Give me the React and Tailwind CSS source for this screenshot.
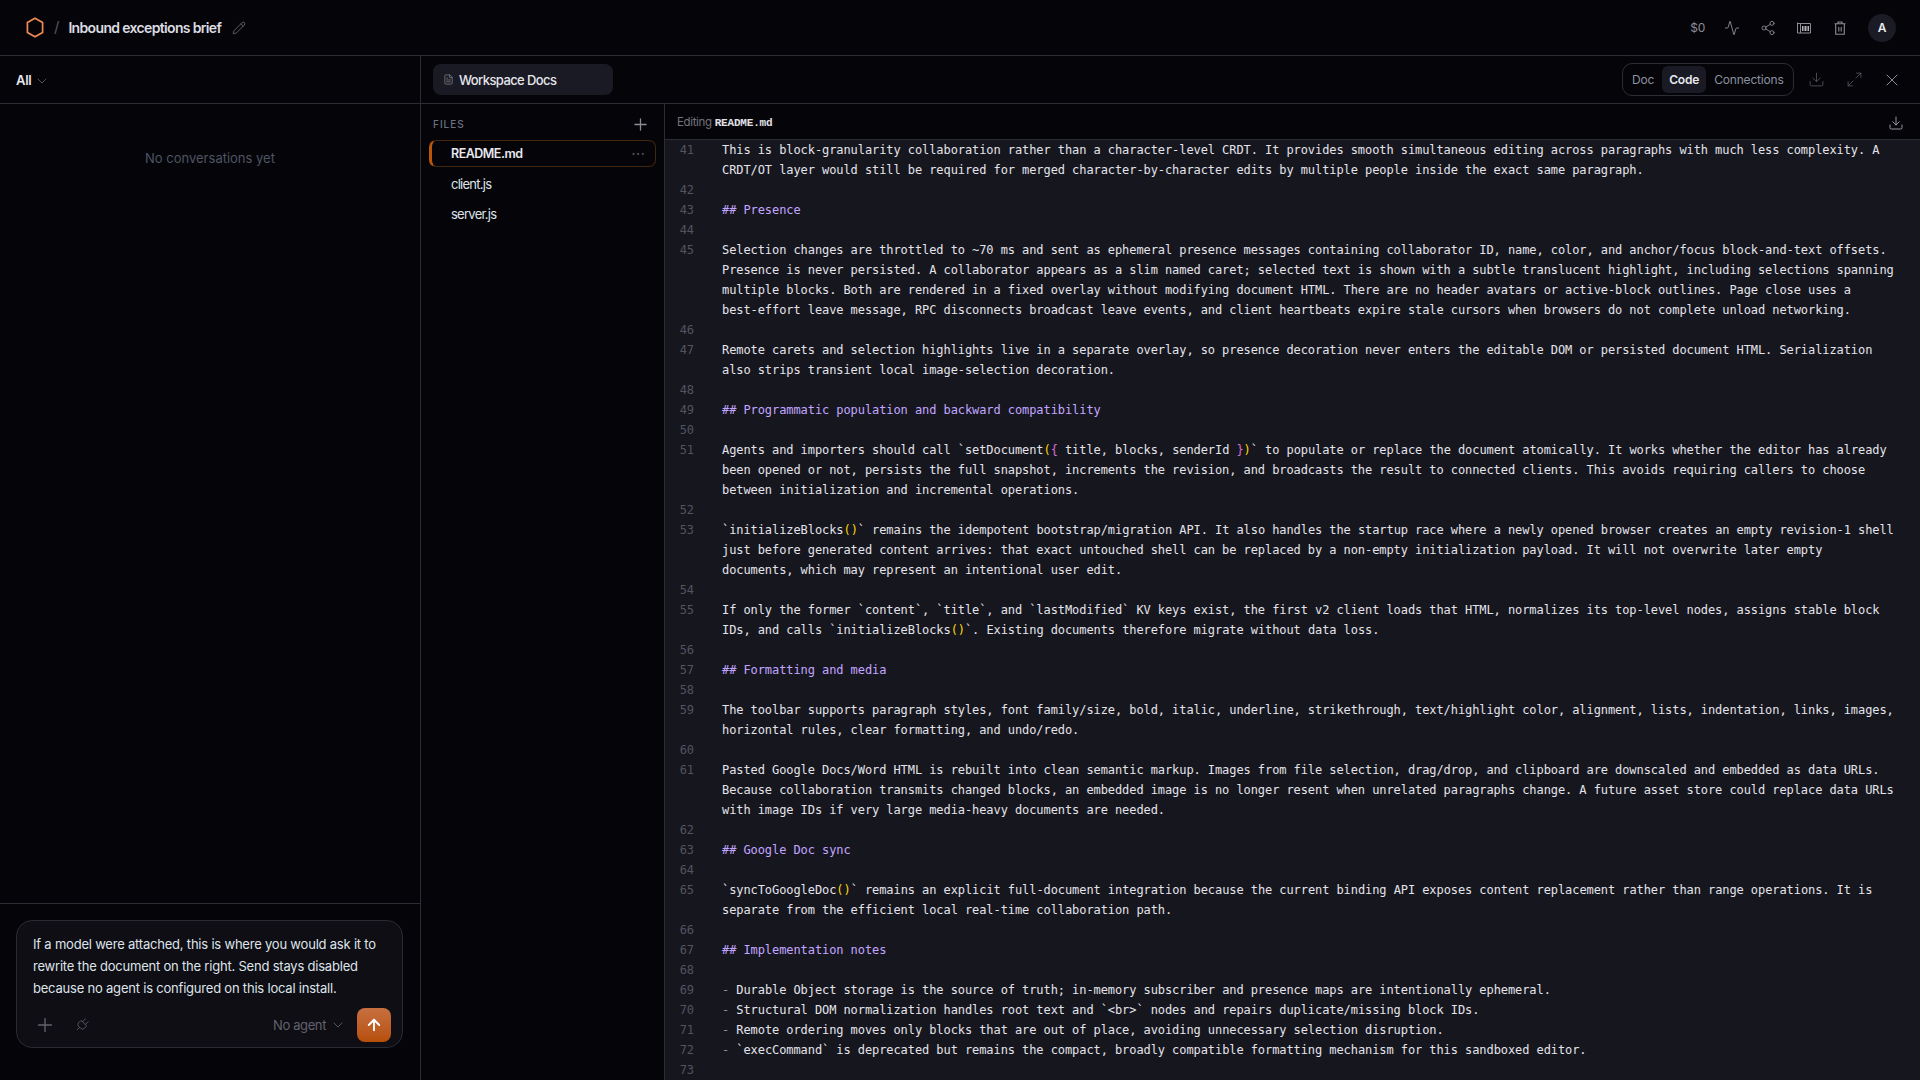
import React from "react";
import { Activity, Share2, Plug, Plus, ChevronDown, ArrowUp, Download, Maximize2, X, Pencil, FileText, MoreHorizontal } from "lucide-react";

const SANS = "font-['Inter','Noto_Sans',sans-serif]";

const code = [
  [41, ["This is block-granularity collaboration rather than a character-level CRDT. It provides smooth simultaneous editing across paragraphs with much less complexity. A", "CRDT/OT layer would still be required for merged character-by-character edits by multiple people inside the exact same paragraph."]],
  [42, [""]],
  [43, ["## Presence"]],
  [44, [""]],
  [45, ["Selection changes are throttled to ~70 ms and sent as ephemeral presence messages containing collaborator ID, name, color, and anchor/focus block-and-text offsets.", "Presence is never persisted. A collaborator appears as a slim named caret; selected text is shown with a subtle translucent highlight, including selections spanning", "multiple blocks. Both are rendered in a fixed overlay without modifying document HTML. There are no header avatars or active-block outlines. Page close uses a", "best-effort leave message, RPC disconnects broadcast leave events, and client heartbeats expire stale cursors when browsers do not complete unload networking."]],
  [46, [""]],
  [47, ["Remote carets and selection highlights live in a separate overlay, so presence decoration never enters the editable DOM or persisted document HTML. Serialization", "also strips transient local image-selection decoration."]],
  [48, [""]],
  [49, ["## Programmatic population and backward compatibility"]],
  [50, [""]],
  [51, ["Agents and importers should call `setDocument({ title, blocks, senderId })` to populate or replace the document atomically. It works whether the editor has already", "been opened or not, persists the full snapshot, increments the revision, and broadcasts the result to connected clients. This avoids requiring callers to choose", "between initialization and incremental operations."]],
  [52, [""]],
  [53, ["`initializeBlocks()` remains the idempotent bootstrap/migration API. It also handles the startup race where a newly opened browser creates an empty revision-1 shell", "just before generated content arrives: that exact untouched shell can be replaced by a non-empty initialization payload. It will not overwrite later empty", "documents, which may represent an intentional user edit."]],
  [54, [""]],
  [55, ["If only the former `content`, `title`, and `lastModified` KV keys exist, the first v2 client loads that HTML, normalizes its top-level nodes, assigns stable block", "IDs, and calls `initializeBlocks()`. Existing documents therefore migrate without data loss."]],
  [56, [""]],
  [57, ["## Formatting and media"]],
  [58, [""]],
  [59, ["The toolbar supports paragraph styles, font family/size, bold, italic, underline, strikethrough, text/highlight color, alignment, lists, indentation, links, images,", "horizontal rules, clear formatting, and undo/redo."]],
  [60, [""]],
  [61, ["Pasted Google Docs/Word HTML is rebuilt into clean semantic markup. Images from file selection, drag/drop, and clipboard are downscaled and embedded as data URLs.", "Because collaboration transmits changed blocks, an embedded image is no longer resent when unrelated paragraphs change. A future asset store could replace data URLs", "with image IDs if very large media-heavy documents are needed."]],
  [62, [""]],
  [63, ["## Google Doc sync"]],
  [64, [""]],
  [65, ["`syncToGoogleDoc()` remains an explicit full-document integration because the current binding API exposes content replacement rather than range operations. It is", "separate from the efficient local real-time collaboration path."]],
  [66, [""]],
  [67, ["## Implementation notes"]],
  [68, [""]],
  [69, ["- Durable Object storage is the source of truth; in-memory subscriber and presence maps are intentionally ephemeral."]],
  [70, ["- Structural DOM normalization handles root text and `<br>` nodes and repairs duplicate/missing block IDs."]],
  [71, ["- Remote ordering moves only blocks that are out of place, avoiding unnecessary selection disruption."]],
  [72, ["- `execCommand` is deprecated but remains the compact, broadly compatible formatting mechanism for this sandboxed editor."]],
  [73, [""]],
];

function Line({ text }) {
  if (text.startsWith("## ")) return <span className="text-[#c3a6ff]">{text}</span>;
  const list = text.startsWith("- ");
  const body = list ? text.slice(2) : text;
  const parts = body.split(/([(){}])/);
  return (
    <>
      {list && <span className="text-[#8f90a6]">- </span>}
      {parts.map((p, i) =>
        p === "(" || p === ")" ? (
          <span key={i} className="text-[#ffd700]">{p}</span>
        ) : p === "{" || p === "}" ? (
          <span key={i} className="text-[#da70d6]">{p}</span>
        ) : (
          <span key={i}>{p}</span>
        )
      )}
    </>
  );
}

function Logo() {
  return (
    <svg width="18" height="21" viewBox="0 0 18 21" fill="none" stroke="#f08a55" strokeWidth="1.7" strokeLinejoin="round">
      <path d="M9 1.2 16.6 5.6V15.4L9 19.8 1.4 15.4V5.6Z" />
    </svg>
  );
}

function Board() {
  return (
    <svg width="16" height="16" viewBox="0 0 16 16" fill="none" stroke="#8b8b96" strokeWidth="1">
      <path d="M1.5 13V2.5M1.5 3.5h13v9.5h-13M4.5 3.5V13" />
      <path stroke="#b4b4bd" d="M6.5 6v5M8 6v5M9.5 6v5M11 6v5M12.5 6v5" />
    </svg>
  );
}

function Trash() {
  return (
    <svg width="16" height="16" viewBox="0 0 16 16" fill="none" stroke="#8b8b96" strokeWidth="1.1">
      <path d="M2.5 3.8h11M6 3.8V2h4v1.8M3.7 3.8V14.2h8.6V3.8M6.8 7v4.5M9.2 7v4.5" />
    </svg>
  );
}

function HeaderIcon({ children }) {
  return <div className="w-9 flex items-center justify-center">{children}</div>;
}

export default function App() {
  return (
    <div className={`h-screen w-screen overflow-hidden flex flex-col bg-[#050509] text-[#e5e5ea] ${SANS}`}>
      <header className="h-[56px] shrink-0 border-b border-[#2c2c35] flex items-center pl-[26px] pr-[24px]">
        <Logo />
        <span className="ml-[10px] text-[15px] text-[#55555f]">/</span>
        <span className="ml-[9px] text-[14px] font-semibold tracking-[-0.047em] text-[#dcdce2]">Inbound exceptions brief</span>
        <Pencil size={14} strokeWidth={1.3} className="ml-[11px] text-[#77777f]" />
        <div className="ml-auto flex items-center text-[#8b8b96]">
          <span className="text-[12px] mr-[9px] tracking-[-0.02em]">$0</span>
          <HeaderIcon><Activity size={16} strokeWidth={1.4} /></HeaderIcon>
          <HeaderIcon><Share2 size={16} strokeWidth={1.3} /></HeaderIcon>
          <HeaderIcon><Board /></HeaderIcon>
          <HeaderIcon><Trash /></HeaderIcon>
          <div className="ml-[10px] w-7 h-7 rounded-full bg-[#1b1b26] flex items-center justify-center text-[12px] font-semibold text-[#e8e8ee]">A</div>
        </div>
      </header>

      <div className="flex-1 min-h-0 flex">
        <aside className="w-[421px] shrink-0 border-r border-[#2c2c35] flex flex-col">
          <div className="h-[48px] shrink-0 border-b border-[#2c2c35] flex items-center pl-[16px] pt-[2px]">
            <span className="text-[13px] font-semibold tracking-[-0.02em] text-[#e8e8ee]">All</span>
            <ChevronDown size={16} strokeWidth={1.1} className="ml-[3px] text-[#6f6f78]" />
          </div>
          <div className="flex-1 pt-[45px] text-center text-[13px] text-[#4f5363]">No conversations yet</div>
          <div className="h-[177px] shrink-0 border-t border-[#2c2c35] pl-[16px] pr-[17px] pt-[16px]">
            <div className="h-[128px] rounded-[16px] border border-[#2a2a33] bg-[#0e0e14] flex flex-col pl-[16px] pr-[11px] pt-[12px]">
              <div className="text-[13px] leading-[22px] text-[#dfe3ea] tracking-[-0.016em]">
                <div>If a model were attached, this is where you would ask it to</div>
                <div>rewrite the document on the right. Send stays disabled</div>
                <div>because no agent is configured on this local install.</div>
              </div>
              <div className="mt-[9px] flex items-center text-[#62626c]">
                <Plus size={22} strokeWidth={1.5} className="ml-[1px]" />
                <Plug size={16} strokeWidth={1.2} className="ml-[18px] rotate-45" />
                <span className="ml-auto pt-[2px] text-[13px] tracking-[-0.03em]">No agent</span>
                <ChevronDown size={16} strokeWidth={1.3} className="ml-[4px]" />
                <div className="ml-[11px] w-[34px] h-[34px] rounded-[8px] bg-gradient-to-b from-[#c8703f] to-[#b64f08] flex items-center justify-center text-white">
                  <ArrowUp size={18} strokeWidth={2.5} />
                </div>
              </div>
            </div>
          </div>
        </aside>

        <main className="flex-1 min-w-0 flex flex-col">
          <div className="h-[48px] shrink-0 border-b border-[#2c2c35] flex items-center pl-[12px] pr-[18px]">
            <div className="w-[180px] h-[31px] rounded-[8px] bg-[#1a1a24] flex items-center pl-[10px]">
              <FileText size={11} strokeWidth={1.5} className="text-[#8b8b96]" />
              <span className="ml-[5px] pt-[2px] text-[13px] font-medium tracking-[-0.045em] text-[#e6e6ec]">Workspace Docs</span>
            </div>
            <div className="ml-auto w-[172px] h-[33px] rounded-[10px] border border-[#2c2c35] flex items-center pl-[9px] text-[12px] tracking-[-0.015em] text-[#8b90a0]">
              <span className="pt-[1px]">Doc</span>
              <span className="ml-[8px] h-[27px] w-[44px] pt-[1px] rounded-[6px] bg-[#1a1a24] flex items-center justify-center font-semibold text-[#e8e8ee]">Code</span>
              <span className="ml-[8px] pt-[1px]">Connections</span>
            </div>
            <Download size={17} strokeWidth={1.2} className="ml-[14px] text-[#55555f]" />
            <Maximize2 size={17} strokeWidth={1.2} className="ml-[21px] text-[#55555f]" />
            <X size={20} strokeWidth={1.2} className="ml-[19px] text-[#8b8b96]" />
          </div>

          <div className="flex-1 min-h-0 flex">
            <div className="w-[244px] shrink-0 border-r border-[#2c2c35] pl-[8px] pr-[8px]">
              <div className="h-[36px] flex items-center pl-[4px] pr-[6px] pt-[4px]">
                <span className="text-[10px] font-medium tracking-[0.1em] text-[#6b7080]">FILES</span>
                <Plus size={19} strokeWidth={1.6} className="ml-auto text-[#8b8b96]" />
              </div>
              <div className="h-[27px] rounded-[7px] border border-[#43260f] border-l-[3px] border-l-[#b8560c] flex items-center pl-[19px] pr-[9px]">
                <span className="pt-[2px] text-[12.5px] font-semibold tracking-[-0.04em] text-[#e8e8ee]">README.md</span>
                <MoreHorizontal size={16} strokeWidth={1.1} className="ml-auto text-[#66666f]" />
              </div>
              <div className="mt-[3px] h-[27px] pt-[2px] flex items-center pl-[22px] text-[13px] tracking-[-0.057em] text-[#dfe3ea]">client.js</div>
              <div className="mt-[4px] h-[27px] pt-[1px] flex items-center pl-[22px] text-[13px] tracking-[-0.057em] text-[#dfe3ea]">server.js</div>
            </div>

            <div className="flex-1 min-w-0 flex flex-col">
              <div className="h-[36px] shrink-0 border-b border-[#2c2c35] flex items-center pl-[12px] pr-[16px] pt-[3px] text-[11.5px]">
                <span className="text-[#72727c] tracking-[-0.03em]">Editing</span>
                <span className="ml-[3px] font-['Liberation_Mono',monospace] font-bold text-[11px] tracking-[-0.2px] text-[#e0e0e6]">README.md</span>
                <Download size={16} strokeWidth={1.4} className="ml-auto text-[#a0a0aa]" />
              </div>
              <div className="flex-1 min-h-0 overflow-hidden bg-[#16161f] font-['DejaVu_Sans_Mono',monospace] text-[12px] leading-[20px] tracking-[-0.08px] text-[#e4e4ea]">
                {code.map(([n, lines]) => (
                  <div key={n} className="flex">
                    <div className="w-[29px] shrink-0 text-right text-[#53535e]">{n}</div>
                    <div className="pl-[28px] whitespace-pre">
                      {lines.map((l, i) => (
                        <div key={i} className="h-[20px]"><Line text={l} /></div>
                      ))}
                    </div>
                  </div>
                ))}
              </div>
            </div>
          </div>
        </main>
      </div>
    </div>
  );
}
